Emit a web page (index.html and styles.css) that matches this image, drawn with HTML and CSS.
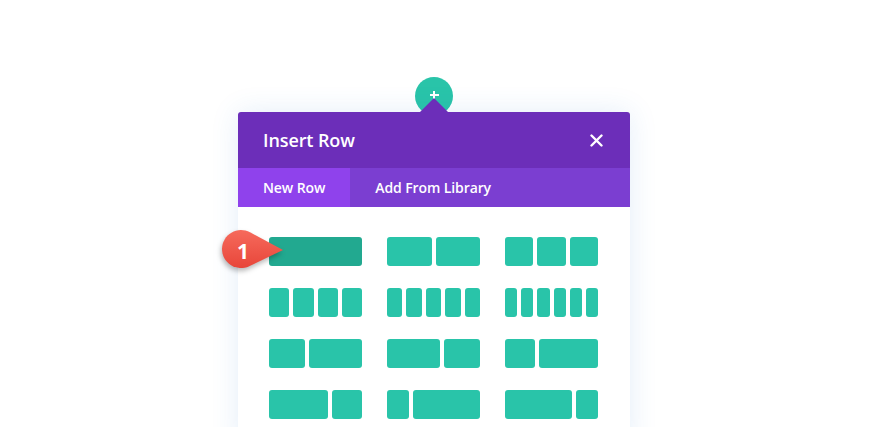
FILE: index.html
```html
<!DOCTYPE html>
<html lang="en">
<head>
<meta charset="utf-8">
<title>Insert Row</title>
<link rel="stylesheet" href="styles.css">
</head>
<body>
<div class="stage">
  <div class="inserter">
    <button class="add-btn" aria-label="Add row"><span class="plus"></span></button>
    <div class="modal">
      <div class="modal-header">
        <h2 class="modal-title">Insert Row</h2>
        <button class="close" aria-label="Close">
          <svg width="13" height="13" viewBox="0 0 13 13"><path d="M1.5 1.5 L11.5 11.5 M11.5 1.5 L1.5 11.5" stroke="#fff" stroke-width="2.4" stroke-linecap="round"/></svg>
        </button>
      </div>
      <div class="tabs">
        <div class="tab active">New Row</div>
        <div class="tab">Add From Library</div>
      </div>
      <div class="layouts">
        <div class="layout first">
          <div class="col w1 hover"></div>
          <div class="badge">
            <svg class="badge-shape" width="70" height="48" viewBox="0 0 70 48">
              <defs>
                <linearGradient id="bg" x1="0" y1="0" x2="0" y2="1">
                  <stop offset="0" stop-color="#f66a5c"/>
                  <stop offset="1" stop-color="#e8463a"/>
                </linearGradient>
              </defs>
              <path d="M64 23 L31 5.3 A19 19 0 1 0 30.2 39.2 Z" fill="url(#bg)"/>
            </svg>
            <span class="badge-num">1</span>
          </div>
        </div>
        <div class="layout"><div class="col w1"></div><div class="col w1"></div></div>
        <div class="layout"><div class="col w1"></div><div class="col w1"></div><div class="col w1"></div></div>

        <div class="layout"><div class="col w1"></div><div class="col w1"></div><div class="col w1"></div><div class="col w1"></div></div>
        <div class="layout"><div class="col w1"></div><div class="col w1"></div><div class="col w1"></div><div class="col w1"></div><div class="col w1"></div></div>
        <div class="layout"><div class="col w1"></div><div class="col w1"></div><div class="col w1"></div><div class="col w1"></div><div class="col w1"></div><div class="col w1"></div></div>

        <div class="layout"><div class="col w2"></div><div class="col w3"></div></div>
        <div class="layout"><div class="col w3"></div><div class="col w2"></div></div>
        <div class="layout"><div class="col w1"></div><div class="col w2"></div></div>

        <div class="layout"><div class="col w2"></div><div class="col w1"></div></div>
        <div class="layout"><div class="col w1"></div><div class="col w3"></div></div>
        <div class="layout"><div class="col w3"></div><div class="col w1"></div></div>
      </div>
    </div>
  </div>
</div>
</body>
</html>
```

FILE: styles.css
```css
html, body {
  margin: 0;
  padding: 0;
  background: #fff;
  overflow: hidden;
}

body {
  font-family: "Open Sans", "Liberation Sans", sans-serif;
}

.stage {
  height: 427px;
  overflow: hidden;
  padding-top: 77px;
  box-sizing: border-box;
}

.inserter {
  width: 392px;
  margin-left: 238px;
  display: flex;
  flex-direction: column;
  align-items: center;
}

.add-btn {
  width: 38px;
  height: 38px;
  border-radius: 50%;
  border: 0;
  padding: 0;
  background: #29c4a9;
  margin-bottom: -3px;
  position: relative;
  display: flex;
  align-items: center;
  justify-content: center;
}

.plus {
  position: relative;
  width: 9px;
  height: 9px;
  margin-top: -2px;
}

.plus::before,
.plus::after {
  content: "";
  position: absolute;
  background: #fff;
}

.plus::before {
  left: 0;
  top: 3.5px;
  width: 9px;
  height: 2px;
}

.plus::after {
  left: 3.5px;
  top: 0;
  width: 2px;
  height: 9px;
}

.modal {
  position: relative;
  width: 392px;
  border-radius: 3px 3px 0 0;
  background: #fff;
  box-shadow: 0 0 28px rgba(43, 120, 210, 0.13);
}

.modal::before {
  content: "";
  position: absolute;
  left: 182px;
  top: -14px;
  width: 0;
  height: 0;
  border-left: 14px solid transparent;
  border-right: 14px solid transparent;
  border-bottom: 14px solid #6c2eb9;
}

.modal-header {
  height: 56px;
  background: #6c2eb9;
  border-radius: 3px 3px 0 0;
  display: flex;
  align-items: center;
  justify-content: space-between;
  padding: 0 25px;
}

.modal-title {
  margin: 0;
  color: #fff;
  font-size: 18px;
  font-weight: 600;
  letter-spacing: -0.1px;
}

.close {
  border: 0;
  background: none;
  padding: 0;
  width: 13px;
  height: 13px;
  margin-right: 2px;
  display: flex;
}

.tabs {
  height: 39px;
  background: #7b3ed1;
  display: flex;
}

.tab {
  display: flex;
  align-items: center;
  padding: 0 25px;
  color: #fff;
  font-size: 14px;
  font-weight: 600;
  letter-spacing: -0.1px;
}

.tab.active {
  background: #8f42ec;
}

.layouts {
  display: grid;
  grid-template-columns: repeat(3, 93px);
  column-gap: 25px;
  row-gap: 22px;
  padding: 30px 31px 30px 31px;
}

.layout {
  display: flex;
  gap: 4px;
  height: 29px;
}

.layout.first {
  position: relative;
}

.col {
  background: #29c4a9;
  border-radius: 3px;
  min-width: 0;
}

.col.hover {
  background: #22a990;
}

.w1 { flex: 1; }
.w2 { flex: 2; }
.w3 { flex: 3; }

.badge {
  position: absolute;
  left: -50px;
  top: -10px;
  width: 70px;
  height: 48px;
}

.badge-shape {
  display: block;
  filter: drop-shadow(-1px 3px 2.5px rgba(0, 0, 0, 0.28));
}

.badge-num {
  position: absolute;
  left: 5px;
  top: 7px;
  width: 38px;
  height: 34px;
  display: flex;
  align-items: center;
  justify-content: center;
  color: #fff;
  font-family: "Open Sans", "Liberation Sans", sans-serif;
  font-weight: 700;
  font-size: 21px;
}
```
